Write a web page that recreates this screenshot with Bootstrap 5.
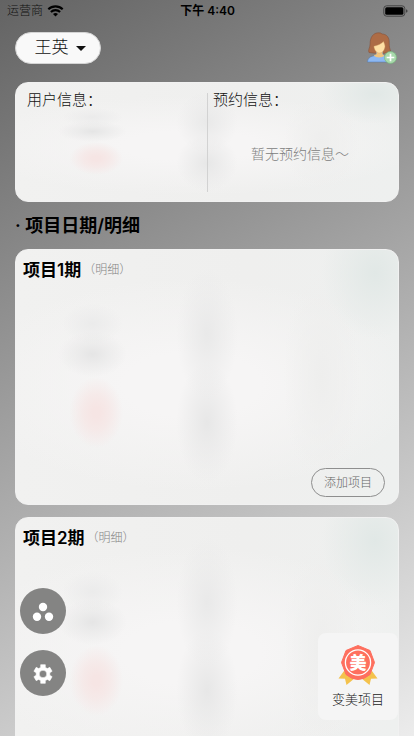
<!DOCTYPE html>
<html lang="zh-CN">
<head>
<meta charset="utf-8">
<meta name="viewport" content="width=device-width, initial-scale=1">
<title>项目日期</title>
<link href="https://cdn.jsdelivr.net/npm/bootstrap@5.3.0/dist/css/bootstrap.min.css" rel="stylesheet">
<style>
  body {
    font-family: Inter, "Noto Sans CJK SC", sans-serif;
    font-size: 15px;
    line-height: 20px;
    font-weight: 300;
    color: #111;
  }
  .btn { font-weight: 300; }
  .app-shell { background: linear-gradient(150deg, #636363, #ececec); }
  .status-bar { height: 22px; padding: 0 6px 0 7px; font-size: 12px; }
  .status-bar > * { flex: 1 1 0; }
  .status-clock { font-weight: 600; }
  .top-bar { padding: 10px 17px 0 15px; }
  .user-picker {
    height: 32px; width: 86px; padding: 0 0 0 4px;
    display: flex; align-items: center; justify-content: center;
    font-size: 17px; color: #111;
    background: #f9f9f9; border: 1px solid #d4d4d4;
  }
  .user-picker:hover { background: #fff; color: #111; }
  .user-picker::after { margin-left: 7px; border-width: 5px 5px 0; }
  .scroll-area { padding: 18px 15px 0; overflow-y: auto; scrollbar-width: none; }
  .scroll-area::-webkit-scrollbar { display: none; }
  .glass {
    border-radius: 13px; border: 1px solid #f1f1f1; overflow: hidden;
    background:
      radial-gradient(ellipse 7% 14% at 21% 64%, #f6e5e4 15%, #f6e5e4b0 50%, #f6e5e400 100%),
      radial-gradient(ellipse 9% 9% at 20% 41%, #e5e5e5, #e5e5e580 45%, #e5e5e500),
      radial-gradient(ellipse 8% 8% at 20% 29%, #ebebeb, #ebebeb00),
      radial-gradient(ellipse 8% 26% at 50% 33%, #e9e9e9, #e9e9e980 50%, #e9e9e900),
      radial-gradient(ellipse 8% 24% at 50% 68%, #e7e7e7, #e7e7e780 50%, #e7e7e700),
      radial-gradient(ellipse 10% 45% at 80% 50%, #eeeeed, #eeeeed00),
      radial-gradient(ellipse 14% 26% at 94% 9%, #e1e8e6, #e3e9e780 55%, #e3e9e700),
      radial-gradient(ellipse 60% 42% at 46% 53%, #f6f5f5 30%, #f6f5f500 100%),
      linear-gradient(90deg, #f1f1f0, #efefee 60%, #eef0ef);
  }
  .info-card { height: 120px; }
  .info-left { padding: 7px 11px; }
  .info-right { padding: 7px 11px 0 5px; margin: 10px 0 9px; border-left: 1px solid #d2d2d2; }
  .info-right .info-title { margin-top: -10px; }
  .info-empty { font-size: 14px; color: #808080; padding-top: 34px; }
  .section-title { font-size: 18px; line-height: 24px; font-weight: 600; margin: 12px 0 11px; color: #000; }
  .stage-card { height: 256px; flex-shrink: 0; padding: 8px 13px 7px 7px; margin-bottom: 12px; }
  .stage-title { font-size: 17px; line-height: 24px; font-weight: 600; margin: 0; color: #000; }
  .stage-link { font-size: 12px; color: #858585; margin-left: 2px; }
  .add-btn {
    height: 29px; width: 74px; padding: 0;
    font-size: 12px; line-height: 16px; color: #666; border: 1px solid #8e8e8e;
  }
  .add-btn:hover { background: #fff; color: #555; }
  .float-tools { left: 20px; bottom: 40px; }
  .round-btn { width: 46px; height: 46px; padding: 0; background: #848483; border: 0; }
  .round-btn:hover { background: #707070; }
  .beauty-btn {
    right: 16px; bottom: 16px; width: 80px; height: 87px; padding: 12px 0 11px;
    background: #f5f5f5; border: 0; border-radius: 8px;
    font-size: 13px; line-height: 20px; color: #222;
  }
  .seal-char { font: 900 17px "Noto Sans CJK SC", sans-serif; }
</style>
</head>
<body>
<div class="app-shell position-relative d-flex flex-column vh-100 overflow-hidden">
  <div class="status-bar d-flex align-items-center flex-shrink-0">
    <div class="d-flex align-items-center gap-1">
      <span>运营商</span>
      <svg width="17" height="12" viewBox="0 0 17 12" aria-hidden="true">
        <g fill="none" stroke="#000" stroke-width="2.1">
          <path d="M1.3 4.3a10.3 10.3 0 0 1 14.4 0"/>
          <path d="M3.9 7a6.6 6.6 0 0 1 9.2 0"/>
        </g>
        <path d="M8.5 11.6 6 9.1a3.6 3.6 0 0 1 5 0z"/>
      </svg>
    </div>
    <div class="status-clock text-center text-black">下午 4:40</div>
    <div class="d-flex justify-content-end">
      <svg width="25" height="12" viewBox="0 0 25 12" aria-hidden="true">
        <rect x=".8" y=".8" width="21" height="10.4" rx="2.8" fill="none" stroke="#444"/>
        <rect x="2.2" y="2.2" width="18.2" height="7.6" rx="1.5"/>
        <path d="M23 4.2q1.6.5 1.6 1.8T23 7.8z" fill="#444"/>
      </svg>
    </div>
  </div>

  <header class="top-bar d-flex justify-content-between align-items-start flex-shrink-0">
    <button type="button" class="btn rounded-pill user-picker dropdown-toggle">王英</button>
    <button type="button" class="btn p-0 border-0 lh-1" aria-label="添加用户">
      <svg width="32" height="32" viewBox="0 0 32 32" aria-hidden="true">
        <path d="M4 20.5C2.8 17.800 5 16 5.100 12 5 5 8.500 .8 13.500 .8c1.700 0 2.700.4 3.700 1.200 4.500.1 7.300 3.700 7 8.800-.1 4 .6 5.600 1.300 8.100-2.400 2.400-5.600 2.500-8.500 2.300H9.500z" fill="#ad6c46" stroke="#87533a" stroke-width=".6"/>
        <path d="M11.500 18h6v4.500q1 .8 4.500 1.800c3 .9 4.500 2.700 4.700 5.700H2.500c.3-3.500 2-5 5-5.800 2.200-.6 4-1 4-2z" fill="#8db8f2" stroke="#4e7ab5" stroke-width=".5"/>
        <path d="M11.500 19h6v3.200c1.200.6 1.700.8 2 1-2 3-8.700 3-10.700 0l2.700-1z" fill="#f1c47e"/>
        <path d="M8.900 14.200c3.600-.6 7.700-2.400 9.600-4.700.4 1.500 1.300 2.500 1.500 4.800-.3 3.700-2.500 6.700-5.500 6.700s-5.300-3.200-5.600-6.800z" fill="#ffe0a5" stroke="#d5a05f" stroke-width=".4"/>
        <circle cx="25.500" cy="25.500" r="6" fill="#a9d9ac" stroke="#78b97f" stroke-width=".7"/>
        <path d="M25.500 21.700v7.600M21.700 25.500h7.600" stroke="#fff" stroke-width="1.700"/>
      </svg>
    </button>
  </header>

  <main class="scroll-area d-flex flex-column flex-grow-1">
    <section class="glass info-card row g-0 flex-shrink-0">
      <div class="col-6 info-left">用户信息：</div>
      <div class="col info-right">
        <div class="info-title">预约信息：</div>
        <div class="info-empty text-center">暂无预约信息～</div>
      </div>
    </section>

    <h1 class="section-title">· 项目日期/明细</h1>

    <section class="glass stage-card d-flex flex-column justify-content-between">
      <div class="d-flex align-items-center">
        <h2 class="stage-title">项目1期</h2>
        <a href="#" class="stage-link text-decoration-none">（明细）</a>
      </div>
      <button type="button" class="btn rounded-pill add-btn align-self-end">添加项目</button>
    </section>

    <section class="glass stage-card d-flex flex-column justify-content-between">
      <div class="d-flex align-items-center">
        <h2 class="stage-title">项目2期</h2>
        <a href="#" class="stage-link text-decoration-none">（明细）</a>
      </div>
    </section>
  </main>

  <div class="float-tools position-absolute d-flex flex-column gap-3">
    <button type="button" class="btn rounded-circle round-btn" aria-label="更多">
      <svg width="22" height="22" viewBox="0 0 22 22" fill="#fff" aria-hidden="true">
        <circle cx="11" cy="6" r="4.200"/><circle cx="5" cy="15.800" r="4.200"/><circle cx="17" cy="15.800" r="4.200"/>
      </svg>
    </button>
    <button type="button" class="btn rounded-circle round-btn" aria-label="设置">
      <svg width="24" height="24" viewBox="0 0 24 24" fill="#fff" aria-hidden="true">
        <path fill-rule="evenodd" stroke="#fff" stroke-width=".6" stroke-linejoin="round" d="M9.700 2.700h4.600v2.700l2.100 1.200 2.400-1.300 2.300 4-2.300 1.400v2.600l2.300 1.400-2.300 4-2.400-1.300-2.100 1.200v2.700H9.700v-2.700l-2.100-1.200-2.400 1.300-2.300-4 2.300-1.400v-2.600L2.900 9.300l2.300-4 2.400 1.300 2.100-1.200zM12 8.200a3.800 3.800 0 1 0 0 7.600 3.800 3.800 0 0 0 0-7.600z"/>
      </svg>
    </button>
  </div>

  <button type="button" class="btn beauty-btn position-absolute d-flex flex-column align-items-center justify-content-between">
    <svg width="40" height="40" viewBox="0 0 40 40" aria-hidden="true">
      <path d="M6 26 .5 33.500l6.500.2L8.500 40 17 33zM34 26l5.500 7.500-6.500.2L31.500 40 23 33z" fill="#f4c24c"/>
      <path d="M20 .5 32 5.500 36.500 17.500 32 29.500Q26 34.500 20 34.500T8 29.500L3.500 17.500 8 5.500z" fill="#fe6f5e" stroke="#fe6f5e" stroke-linejoin="round"/>
      <circle cx="20" cy="17.500" r="12.600" fill="none" stroke="#fff" stroke-width="1.300"/>
      <text class="seal-char" x="20" y="24" text-anchor="middle" fill="#fff">美</text>
    </svg>
    <span>变美项目</span>
  </button>
</div>
<script src="https://cdn.jsdelivr.net/npm/bootstrap@5.3.0/dist/js/bootstrap.bundle.min.js"></script>
</body>
</html>
